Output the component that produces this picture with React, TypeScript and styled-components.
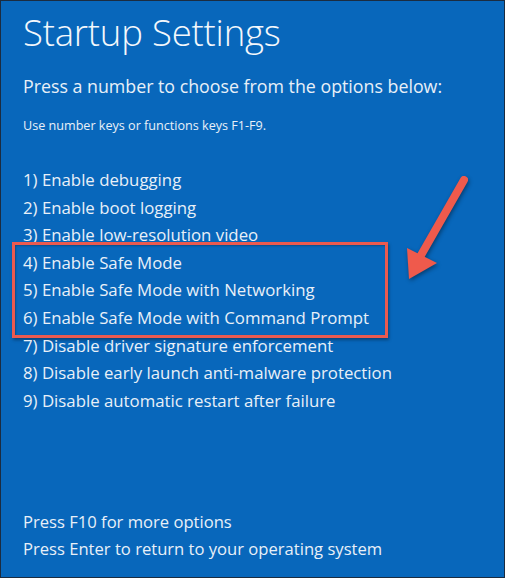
import React from 'react'
import styled, { createGlobalStyle } from 'styled-components'

const GlobalStyle = createGlobalStyle`
  html, body {
    margin: 0;
    padding: 0;
    background: #0867bb;
  }
  body {
    font-family: 'Open Sans', 'Noto Sans', sans-serif;
    color: #ffffff;
  }
`

const Screen = styled.div`
  position: relative;
  width: 505px;
  height: 578px;
  box-sizing: border-box;
  background: #0867bb;
  box-shadow: inset 0 0 0 1px #1b2c40;
  padding: 8px 0 0 23px;
  display: flex;
  flex-direction: column;
  overflow: hidden;
`

const Title = styled.h1`
  margin: 0;
  font-size: 36.5px;
  font-weight: 300;
  line-height: 48px;
  letter-spacing: -0.2px;
  color: #f4f8fc;
`

const Prompt = styled.p`
  margin: 18px 0 0;
  font-size: 17.8px;
  font-weight: 400;
  line-height: 24px;
  color: #e8f0f8;
`

const Hint = styled.p`
  margin: 19px 0 0;
  font-size: 12.6px;
  line-height: 18px;
  color: #e8f0f8;
`

const OptionList = styled.div`
  margin-top: 31px;
  display: flex;
  flex-direction: column;
`

const Option = styled.div<{ $size?: number }>`
  font-size: ${(p) => p.$size ?? 16.8}px;
  line-height: 27.6px;
  color: #e8f0f8;
  white-space: nowrap;
`

const Highlight = styled.div`
  width: 376px;
  box-sizing: border-box;
  margin: -7px 0 -6px -11px;
  padding: 4px 0 3px 8px;
  border: 3px solid #ea5a4f;
  box-shadow: 1px 2px 3px rgba(0, 0, 0, 0.35), inset 1px 1px 2px rgba(0, 0, 0, 0.25);
`

const Footer = styled.div`
  margin-top: auto;
  margin-bottom: 15px;
  display: flex;
  flex-direction: column;
`

const Arrow = styled.svg`
  position: absolute;
  left: 398px;
  top: 168px;
  filter: drop-shadow(1px 2px 2px rgba(0, 0, 0, 0.4));
`

const options = [
  'Enable debugging',
  'Enable boot logging',
  'Enable low-resolution video',
  'Enable Safe Mode',
  'Enable Safe Mode with Networking',
  'Enable Safe Mode with Command Prompt',
  'Disable driver signature enforcement',
  'Disable early launch anti-malware protection',
  'Disable automatic restart after failure',
]

const App = () => {
  const row = (i: number) => (
    <Option key={i}>
      {i + 1}) {options[i]}
    </Option>
  )

  return (
    <>
      <GlobalStyle />
      <Screen>
        <Title>Startup Settings</Title>
        <Prompt>Press a number to choose from the options below:</Prompt>
        <Hint>Use number keys or functions keys F1-F9.</Hint>

        <OptionList>
          {[0, 1, 2].map(row)}
          <Highlight>{[3, 4, 5].map(row)}</Highlight>
          {[6, 7, 8].map(row)}
        </OptionList>

        <Footer>
          <Option $size={16.6}>Press F10 for more options</Option>
          <Option $size={16.6}>Press Enter to return to your operating system</Option>
        </Footer>

        <Arrow width="80" height="120" viewBox="0 0 80 120">
          <line x1="66" y1="12" x2="18" y2="96" stroke="#ef5a4c" strokeWidth="8" strokeLinecap="round" />
          <polygon points="11,111 9,80 39,95" fill="#ef5a4c" />
        </Arrow>
      </Screen>
    </>
  )
}

export default App
